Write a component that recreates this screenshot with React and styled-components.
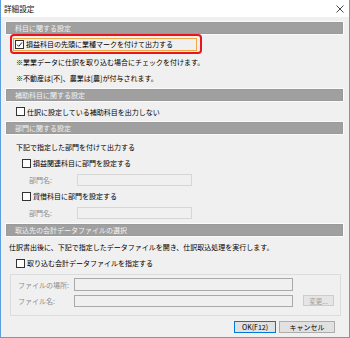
import React from "react";
import styled, { createGlobalStyle } from "styled-components";

const Global = createGlobalStyle`
  html, body { margin: 0; padding: 0; background: #ffffff; }
  body { font-family: "Noto Sans CJK JP", "Noto Sans", sans-serif; }
  * { box-sizing: border-box; }
`;

const Window = styled.div`
  width: 350px;
  height: 338px;
  border: 1px solid #5c9ede;
  border-top: none;
  background: #f0f0f0;
  display: flex;
  flex-direction: column;
  font-family: "Noto Sans CJK JP", sans-serif;
  font-size: 7px;
  color: #000;
`;

const TitleBar = styled.div`
  height: 17px;
  background: #ffffff;
  display: flex;
  align-items: center;
  justify-content: space-between;
  padding: 0 5px 0 3px;
  font-size: 7.6px;
  color: #111;
`;

const Body = styled.div`
  flex: 1;
  display: flex;
  flex-direction: column;
  padding: 5px 6px 0 5px;
`;

const Header = styled.div`
  height: 12px;
  margin-top: ${(p) => p.$mt || 0}px;
  background: #a0a0a0;
  border: 1px solid #9a9a9a;
  box-shadow: 0 0 0 1px #fbfbfb;
  color: #f2f2f2;
  display: flex;
  align-items: center;
  padding-left: 8px;
  font-size: 7px;
`;

const Row = styled.div`
  height: ${(p) => p.$h || 16}px;
  margin-top: ${(p) => p.$mt || 0}px;
  display: flex;
  align-items: center;
  padding-left: ${(p) => p.$indent || 0}px;
  color: ${(p) => (p.$muted ? "#8c8c8c" : "#000")};
  white-space: nowrap;
`;

const RedBox = styled.div`
  margin-left: 4px;
  width: 192px;
  height: 20px;
  border: 2px solid #e8151b;
  border-radius: 4px;
  display: flex;
  align-items: center;
`;

const FocusRect = styled.div`
  margin-left: 1px;
  width: 184px;
  height: 13px;
  border: 1px solid #f3a640;
  display: flex;
  align-items: center;
  padding-left: 1px;
`;

const Box = styled.span`
  width: 9px;
  height: 9px;
  border: 1px solid #333;
  background: #fff;
  flex: none;
  display: inline-flex;
  align-items: center;
  justify-content: center;
  margin-right: 2px;
`;

const Label = styled.span`
  width: ${(p) => p.$w || "auto"};
  flex: none;
`;

const Input = styled.div`
  width: ${(p) => p.$w}px;
  height: ${(p) => p.$h || 12}px;
  margin-left: ${(p) => p.$ml || 0}px;
  border: 1px solid ${(p) => (p.$dark ? "#a9a9a9" : "#d6d6d6")};
  background: #f0f0f0;
  flex: none;
`;

const GroupBox = styled.div`
  margin: 3px 2px 0 4px;
  height: 42px;
  border: 1px solid #dcdcdc;
  display: flex;
  flex-direction: column;
  padding: 2px 0 0 7px;
`;

const SmallButton = styled.div`
  margin-left: 10px;
  width: 31px;
  height: 11px;
  border: 1px solid #cccccc;
  background: #e5e5e5;
  color: #a0a0a0;
  display: flex;
  align-items: center;
  justify-content: center;
  font-size: 6.5px;
`;

const ButtonBar = styled.div`
  display: flex;
  justify-content: flex-end;
  gap: 3px;
  margin-top: 5px;
  padding-right: 8px;
`;

const Button = styled.div`
  width: ${(p) => p.$w}px;
  height: 12px;
  border: 1px solid ${(p) => (p.$primary ? "#0078d7" : "#adadad")};
  background: #e1e1e1;
  display: flex;
  align-items: center;
  justify-content: center;
  font-size: 7px;
  color: #000;
`;

const Check = ({ checked }) => (
  <Box>
    {checked && (
      <svg width="7" height="7" viewBox="0 0 7 7">
        <path d="M1 3.6 L2.8 5.4 L6 1.4" fill="none" stroke="#222" strokeWidth="1" />
      </svg>
    )}
  </Box>
);

export default function App() {
  return (
    <>
      <Global />
      <Window>
        <TitleBar>
          <span>詳細設定</span>
          <svg width="8" height="8" viewBox="0 0 8 8">
            <path d="M0.5 0.5 L7.5 7.5 M7.5 0.5 L0.5 7.5" stroke="#333" strokeWidth="0.9" />
          </svg>
        </TitleBar>
        <Body>
          <Header>科目に関する設定</Header>
          <RedBox>
            <FocusRect>
              <Check checked />
              <Label>損益科目の先頭に業種マークを付けて出力する</Label>
            </FocusRect>
          </RedBox>
          <Row $h={15} $indent={10}>※業業データに仕訳を取り込む場合にチェックを付けます。</Row>
          <Row $h={18} $indent={10}>※不動産は[不]、農業は[農]が付与されます。</Row>
          <Header $mt={2}>補助科目に関する設定</Header>
          <Row $h={21} $indent={10}>
            <Check />
            <Label>仕訳に設定している補助科目を出力しない</Label>
          </Row>
          <Header>部門に関する設定</Header>
          <Row $h={16} $mt={5} $indent={10}>下記で指定した部門を付けて出力する</Row>
          <Row $h={16} $indent={16}>
            <Check />
            <Label>損益関連科目に部門を設定する</Label>
          </Row>
          <Row $h={17} $indent={23} $muted>
            <Label $w="48px">部門名:</Label>
            <Input $w={115} />
          </Row>
          <Row $h={16} $indent={16}>
            <Check />
            <Label>貸借科目に部門を設定する</Label>
          </Row>
          <Row $h={17} $indent={23} $muted>
            <Label $w="48px">部門名:</Label>
            <Input $w={115} />
          </Row>
          <Header $mt={3}>取込先の会計データファイルの選択</Header>
          <Row $h={16} $mt={3} $indent={3}>仕訳書出後に、下記で指定したデータファイルを開き、仕訳取込処理を実行します。</Row>
          <Row $h={16} $indent={10}>
            <Check />
            <Label>取り込む会計データファイルを指定する</Label>
          </Row>
          <GroupBox>
            <Row $h={15} $muted>
              <Label $w="56px">ファイルの場所:</Label>
              <Input $w={219} $h={13} $dark />
            </Row>
            <Row $h={17} $muted>
              <Label $w="56px">ファイル名:</Label>
              <Input $w={219} $h={12} $dark />
              <SmallButton>変更...</SmallButton>
            </Row>
          </GroupBox>
          <ButtonBar>
            <Button $w={42} $primary>OK(F12)</Button>
            <Button $w={56}>キャンセル</Button>
          </ButtonBar>
        </Body>
      </Window>
    </>
  );
}
